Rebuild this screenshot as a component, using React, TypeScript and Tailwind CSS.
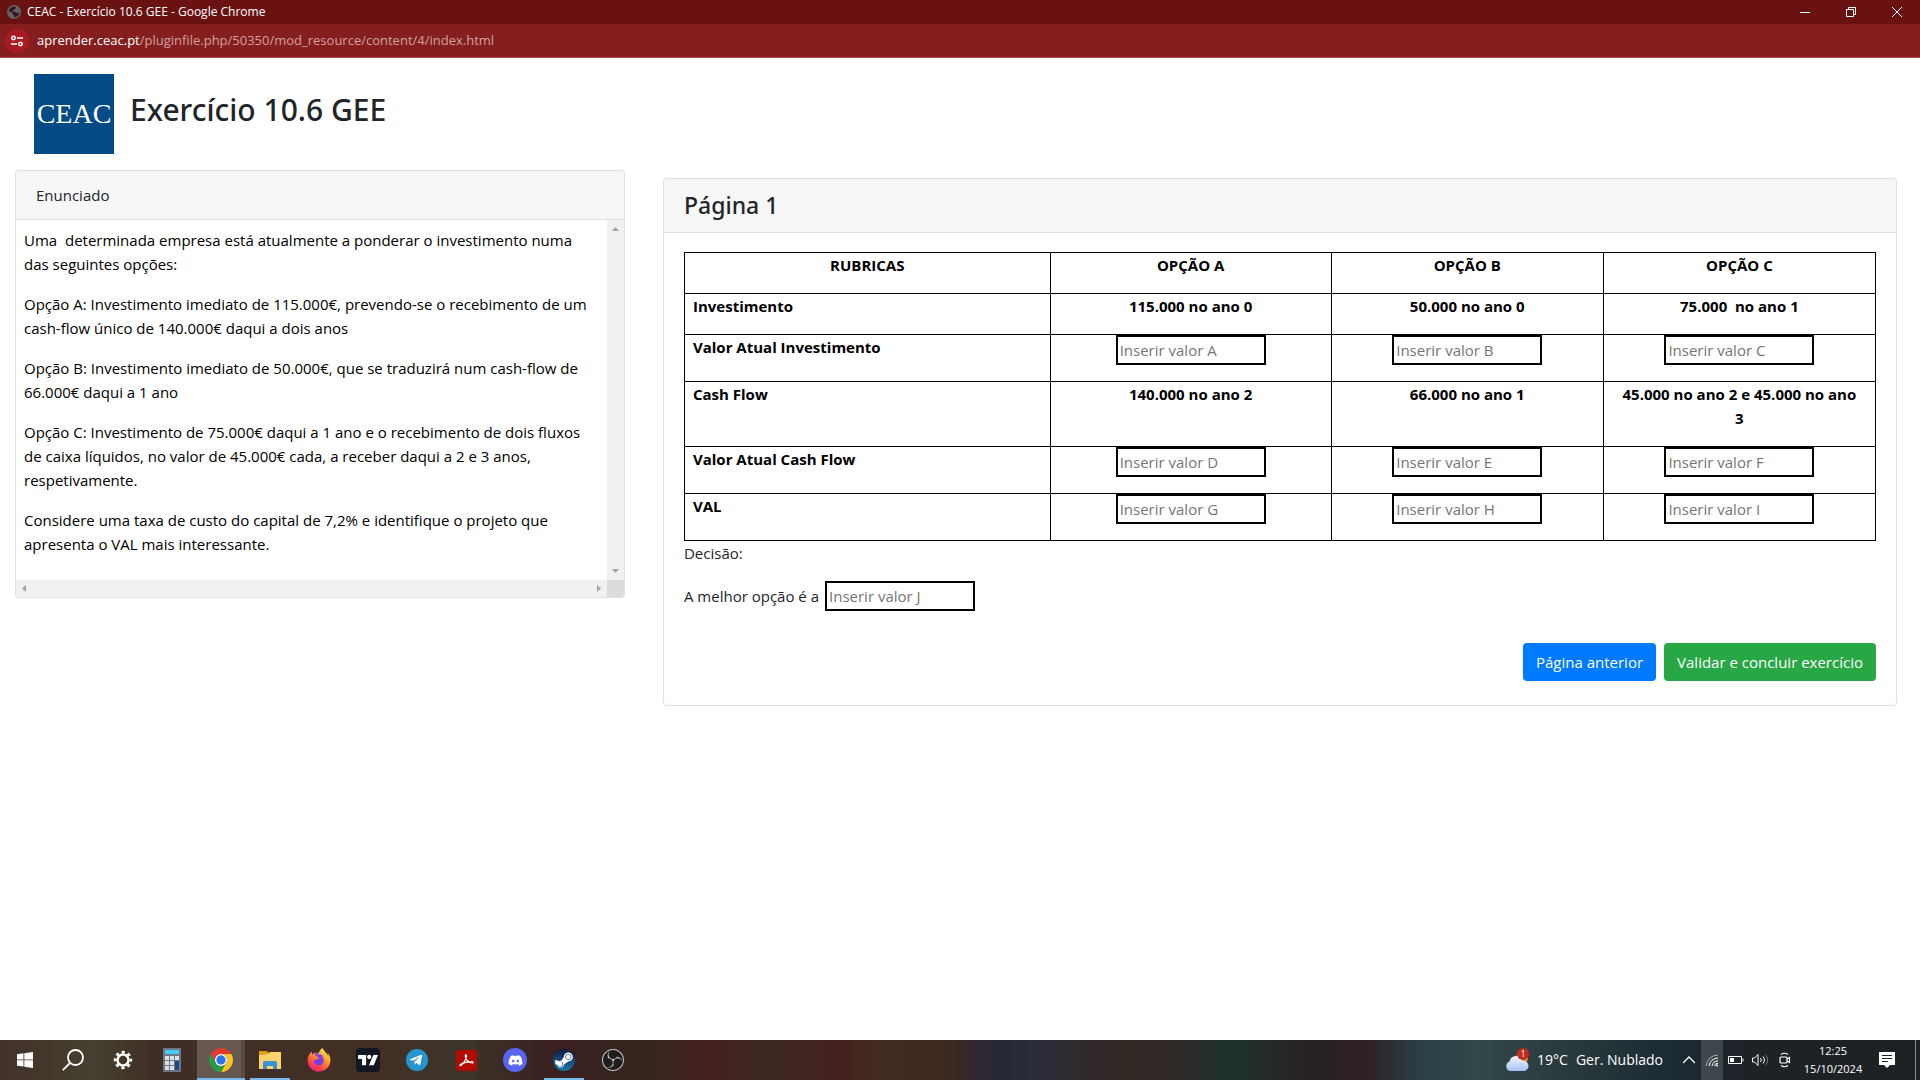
import type { ReactNode } from 'react'
import { FaDiscord, FaFirefoxBrowser, FaSteamSymbol, FaTelegramPlane } from 'react-icons/fa'
import { SiObsstudio, SiTradingview } from 'react-icons/si'

const statement = [
  'Uma\u00a0 determinada empresa está atualmente a ponderar o investimento numa das seguintes opções:',
  'Opção A: Investimento imediato de 115.000€, prevendo-se o recebimento de um cash-flow único de 140.000€ daqui a dois anos',
  'Opção B: Investimento imediato de 50.000€, que se traduzirá num cash-flow de 66.000€ daqui a 1 ano',
  'Opção C: Investimento de 75.000€ daqui a 1 ano e o recebimento de dois fluxos de caixa líquidos, no valor de 45.000€ cada, a receber daqui a 2 e 3 anos, respetivamente.',
  'Considere uma taxa de custo do capital de 7,2% e identifique o projeto que apresenta o VAL mais interessante.',
]

type Row = { label: string; values?: string[]; inputs?: string[] }

const rows: Row[] = [
  { label: 'Investimento', values: ['115.000 no ano 0', '50.000 no ano 0', '75.000\u00a0 no ano 1'] },
  { label: 'Valor Atual Investimento', inputs: ['A', 'B', 'C'] },
  { label: 'Cash Flow', values: ['140.000 no ano 2', '66.000 no ano 1', '45.000 no ano 2 e 45.000 no ano 3'] },
  { label: 'Valor Atual Cash Flow', inputs: ['D', 'E', 'F'] },
  { label: 'VAL', inputs: ['G', 'H', 'I'] },
]

const ValueInput = ({ id }: { id: string }) => (
  <input
    id={`valor-${id}`}
    type="text"
    aria-label={`Valor ${id}`}
    placeholder={`Inserir valor ${id}`}
    className="block h-[30px] w-[150px] border-2 border-black bg-white px-0.5 text-[15px] text-black placeholder:text-[#757575]"
  />
)

const WindowBar = () => (
  <header>
    <div className="flex h-6 items-center justify-between bg-[#6a1212] text-white">
      <div className="flex items-center gap-[6px] pl-[7px]">
        <svg viewBox="0 0 14 14" className="size-[14px]">
          <circle cx="7" cy="7" r="7" fill="#5f6368" />
          <path d="M6.5 1.5C4 2 2 4 1.6 6.600l2.600.2 1.600 1.400v1.300l1.400.4.2 2.500c2.500-.2 4.600-2 5-4.700L9.600 8 8 6.800H5.600V5.200h1.600V3.800h1.600V2z" fill="#3b1213" />
        </svg>
        <span className="text-xs">CEAC - Exercício 10.6 GEE - Google Chrome</span>
      </div>
      <div className="flex h-full">
        <button aria-label="Minimizar" className="flex w-[46px] items-center justify-center">
          <svg viewBox="0 0 10 10" className="size-[10px]"><path d="M0 5.500h10" stroke="#fff" /></svg>
        </button>
        <button aria-label="Restaurar" className="flex w-[46px] items-center justify-center">
          <svg viewBox="0 0 10 10" className="size-[10px]" fill="none" stroke="#fff">
            <path d="M.5 2.500h7v7h-7zM2.500 2.500v-2h7v7h-2" />
          </svg>
        </button>
        <button aria-label="Fechar" className="flex w-[46px] items-center justify-center">
          <svg viewBox="0 0 10 10" className="size-[10px]"><path d="M0 0l10 10M10 0L0 10" stroke="#fff" /></svg>
        </button>
      </div>
    </div>
    <div className="flex h-[34px] items-center gap-2 border-b border-[#b04a4d] bg-[#841e1f] pl-[5px]">
      <button aria-label="Informações do site" className="flex size-6 items-center justify-center rounded-full bg-[#a91b1e]">
        <svg viewBox="0 0 12 12" className="size-3" fill="none" stroke="#fff" strokeWidth="1.500">
          <circle cx="2.500" cy="3" r="1.700" />
          <circle cx="9.500" cy="9" r="1.700" />
          <path d="M6 3h6M0 9h6" />
        </svg>
      </button>
      <span className="pb-0.5 text-[13px] text-[#d3a09f]">
        <span className="text-white">aprender.ceac.pt</span>/pluginfile.php/50350/mod_resource/content/4/index.html
      </span>
    </div>
  </header>
)

const Arrow = ({ d }: { d: string }) => (
  <svg viewBox="0 0 17 17" className="size-[17px] shrink-0">
    <path d={d} fill="#a3a3a3" />
  </svg>
)

const StatementCard = () => (
  <section className="overflow-hidden rounded border border-[#dfdfdf] bg-white">
    <h2 className="border-b border-[#dfdfdf] bg-[#f7f7f7] px-5 py-3">Enunciado</h2>
    <div className="flex">
      <div className="grow px-2 py-2 text-black">
        {statement.map((text) => (
          <p key={text} className="mb-4">{text}</p>
        ))}
      </div>
      <div className="flex flex-col justify-between bg-[#f1f1f1]">
        <Arrow d="M5 11h7L8.500 7z" />
        <Arrow d="M5 6h7l-3.500 4z" />
      </div>
    </div>
    <div className="flex bg-[#f1f1f1]">
      <div className="flex grow justify-between">
        <Arrow d="M10 5v7L6 8.500z" />
        <Arrow d="M7 5v7l4-3.500z" />
      </div>
      <div className="size-[17px] bg-[#dcdcdc]" />
    </div>
  </section>
)

const ExerciseCard = () => (
  <section className="rounded border border-[#dfdfdf] bg-white">
    <h2 className="rounded-t border-b border-[#dfdfdf] bg-[#f7f7f7] px-5 py-3 font-['Noto_Sans',sans-serif] text-[23px] leading-[29px] font-medium">
      Página 1
    </h2>
    <div className="px-5 pt-[19px] pb-6">
      <table className="w-full table-fixed border-collapse text-black">
        <thead>
          <tr>
            <th className="w-[30.7%] border border-black px-2 pb-4">RUBRICAS</th>
            <th className="w-[23.6%] border border-black px-4 pb-4">OPÇÃO A</th>
            <th className="border border-black px-4 pb-4">OPÇÃO B</th>
            <th className="border border-black px-4 pb-4">OPÇÃO C</th>
          </tr>
        </thead>
        <tbody>
          {rows.map((row) => (
            <tr key={row.label}>
              <th scope="row" className="border border-black px-2 pb-4 text-left align-top">{row.label}</th>
              {row.values?.map((value) => (
                <td key={value} className="border border-black px-4 pb-4 text-center align-top font-bold">{value}</td>
              ))}
              {row.inputs?.map((id) => (
                <td key={id} className="border border-black px-4 pb-4 align-top">
                  <div className="flex justify-center"><ValueInput id={id} /></div>
                </td>
              ))}
            </tr>
          ))}
        </tbody>
      </table>
      <p className="mb-4">Decisão:</p>
      <div className="mb-8 flex items-center gap-1.5">
        <label htmlFor="valor-J">A melhor opção é a</label>
        <ValueInput id="J" />
      </div>
      <div className="flex justify-end gap-2 text-white">
        <button className="rounded bg-[#007bff] px-[13px] py-[7px]">Página anterior</button>
        <button className="rounded bg-[#28a745] px-[13px] py-[7px]">Validar e concluir exercício</button>
      </div>
    </div>
  </section>
)

const ChromeIcon = () => (
  <svg viewBox="0 0 24 24" className="size-6">
    <path d="M12 6h10.390A12 12 0 0 0 1.610 6L6.800 15A6 6 0 0 1 12 6z" fill="#e33b2e" />
    <path d="M17.200 15L12 24A12 12 0 0 0 22.390 6H12a6 6 0 0 1 5.200 9z" fill="#fcc31e" />
    <path d="M6.800 15L1.610 6A12 12 0 0 0 12 24l5.200-9a6 6 0 0 1-10.400 0z" fill="#2a9a48" />
    <circle cx="12" cy="12" r="6" fill="#fff" />
    <circle cx="12" cy="12" r="4.700" fill="#2a76e8" />
  </svg>
)

const CalculatorIcon = () => (
  <svg viewBox="0 0 18 24" className="h-6 w-[18px]">
    <rect width="18" height="24" rx="1" fill="#6d7883" />
    <rect x="2" y="2" width="14" height="4" fill="#45cdf5" />
    <path d="M2 8h4v4H2zM7 8h4v4H7zM12 8h4v4h-4zM2 13h4v4H2zM7 13h4v4H7zM2 18h4v4H2zM7 18h4v4H7z" fill="#dde1e4" />
    <path d="M12 13h4v9h-4z" fill="#164a8c" />
  </svg>
)

const FolderIcon = () => (
  <svg viewBox="0 0 22 18" className="h-[18px] w-[22px]">
    <path d="M0 0h8l2 2v3H0z" fill="#d89b15" />
    <path d="M0 4l9-1 2-2h11v17H0z" fill="#fcd36b" />
    <path d="M4 18v-6q0-2 2-2h10q2 0 2 2v6h-4v-3H8v3z" fill="#3b8fd3" />
  </svg>
)

const FirefoxIcon = () => (
  <svg viewBox="0 0 24 24" className="size-6">
    <defs>
      <linearGradient id="flame" x1="0.800" y1="0" x2="0.200" y2="1">
        <stop offset="0" stopColor="#fff04a" />
        <stop offset="0.400" stopColor="#ff9a28" />
        <stop offset="0.750" stopColor="#ff4050" />
        <stop offset="1" stopColor="#e81f80" />
      </linearGradient>
    </defs>
    <circle cx="12" cy="12" r="8" fill="#7a3fe0" />
    <FaFirefoxBrowser size={24} fill="url(#flame)" />
  </svg>
)

const AcrobatIcon = () => (
  <svg viewBox="0 0 21 21" className="size-[21px]">
    <rect width="21" height="21" rx="3" fill="#b30b00" />
    <path
      d="M4.500 15.500c2-1 5.500-5 6-9.500.1-1.700-1.400-1.700-1.300 0 .3 3.500 3.500 6.800 7 7 1.600-.2 1-1.400-.7-1.300-3.500 0-8 1-10.600 2.600-1.200.9-1.400 1.700-.4 1.200z"
      fill="none"
      stroke="#fff"
      strokeWidth="1.200"
    />
  </svg>
)

const apps: { name: string; icon: ReactNode; active?: boolean; open?: boolean }[] = [
  {
    name: 'Iniciar',
    icon: (
      <svg viewBox="0 0 16 16" className="size-4" fill="#fff">
        <path d="M0 2.200L6.500 1.300v6.200H0zM7.300 1.200L16 0v7.500H7.300zM0 8.300h6.500v6.300L0 13.700zM7.300 8.300H16V16l-8.700-1.200z" />
      </svg>
    ),
  },
  {
    name: 'Procurar',
    icon: (
      <svg viewBox="0 0 24 22" className="h-[22px] w-6" fill="none" stroke="#fff" strokeWidth="1.800">
        <circle cx="13.500" cy="8.500" r="7.500" />
        <path d="M8 14L.8 21.200" />
      </svg>
    ),
  },
  {
    name: 'Definições',
    icon: (
      <svg viewBox="0 0 20 20" className="size-5" fill="none" stroke="#fff">
        <circle cx="10" cy="10" r="5.500" strokeWidth="2.500" />
        <circle cx="10" cy="10" r="7.800" strokeWidth="2.800" strokeDasharray="3.060 3.060" strokeDashoffset="1.530" />
      </svg>
    ),
  },
  { name: 'Calculadora', icon: <CalculatorIcon /> },
  { name: 'Google Chrome', icon: <ChromeIcon />, active: true },
  { name: 'Explorador de Ficheiros', icon: <FolderIcon />, open: true },
  { name: 'Firefox', icon: <FirefoxIcon /> },
  {
    name: 'TradingView',
    icon: <span className="flex size-6 items-center justify-center rounded bg-[#131722]"><SiTradingview size={20} /></span>,
  },
  {
    name: 'Telegram',
    icon: (
      <span className="flex size-[22px] items-center justify-center rounded-full bg-[#2497d3] pr-0.5">
        <FaTelegramPlane size={14} />
      </span>
    ),
  },
  { name: 'Adobe Acrobat', icon: <AcrobatIcon /> },
  {
    name: 'Discord',
    icon: <span className="flex size-6 items-center justify-center rounded-full bg-[#5865f2]"><FaDiscord size={15} /></span>,
  },
  {
    name: 'Steam',
    icon: (
      <span className="flex size-[22px] items-center justify-center rounded-full bg-linear-to-b from-[#101c40] to-[#1579ae]">
        <FaSteamSymbol size={20} />
      </span>
    ),
    open: true,
  },
  {
    name: 'OBS Studio',
    icon: <span className="flex size-[22px] items-center justify-center rounded-full bg-[#1f1d1e] text-[#cfcaca]"><SiObsstudio size={22} /></span>,
  },
]

const Taskbar = () => (
  <footer className="flex h-10 justify-between bg-[linear-gradient(90deg,#42312a_0%,#45402f_5%,#3f2e26_8%,#432f26_20%,#3c352b_24%,#3a1f1f_29%,#35251f_33%,#45211f_37%,#3d2922_40%,#45211f_44%,#432d23_46%,#40291f_49%,#262837_52%,#2b2d3b_54%,#332824_58%,#2f2927_61%,#1f322f_64%,#262222_68%,#2e1f25_71%,#2b4045_74%,#32484a_77%,#28383b_82%,#1c2b33_87%,#1d2226_91%,#1c2224_100%)] text-white">
    <nav className="flex gap-px pl-px">
      {apps.map((app) => (
        <button
          key={app.name}
          aria-label={app.name}
          className={`flex w-12 flex-col items-center ${app.active ? 'bg-white/20 shadow-[inset_-4px_0_0_rgba(0,0,0,0.15)]' : ''}`}
        >
          <span className="flex grow items-center pt-0.5">{app.icon}</span>
          <span className={`h-0.5 ${app.active ? 'w-full bg-[#76b9ed]' : app.open ? 'w-10 bg-[#76b9ed]' : 'w-10'}`} />
        </button>
      ))}
    </nav>
    <div className="flex">
      <div className="flex items-center gap-2 pr-5">
        <svg viewBox="0 0 24 24" className="size-6">
          <defs>
            <linearGradient id="cloud" x1="0" y1="0" x2="0" y2="1">
              <stop offset="0" stopColor="#f2f6ff" />
              <stop offset="1" stopColor="#a4c1f5" />
            </linearGradient>
          </defs>
          <circle cx="17" cy="10" r="6" fill="#f0952a" />
          <path d="M5 23a5 5 0 0 1-.5-9.500A7 7 0 0 1 18 13a5 5 0 0 1 1 10z" fill="url(#cloud)" />
          <circle cx="18" cy="6" r="6" fill="#c42b1c" />
          <text x="18" y="9" textAnchor="middle" fontSize="9" fill="#fff">1</text>
        </svg>
        <span className="text-sm">19°C</span>
        <span className="text-sm">Ger. Nublado</span>
      </div>
      <button aria-label="Mostrar ícones ocultos" className="flex w-[18px] items-center">
        <svg viewBox="0 0 12 12" className="size-3" fill="none" stroke="#fff" strokeWidth="1.300"><path d="M0 9l6-6 6 6" /></svg>
      </button>
      <button aria-label="Rede" className="flex w-[22px] items-center justify-center bg-white/15">
        <svg viewBox="0 0 14 14" className="size-[14px]" fill="none" stroke="#fff">
          <path d="M1 13A12 12 0 0 1 13 2" stroke="#aaa" />
          <path d="M4 13a9 9 0 0 1 9-8M7 13a6 6 0 0 1 6-5M9.500 13a3 3 0 0 1 3.500-2.500" />
          <circle cx="12" cy="12.500" r="1" fill="#fff" stroke="none" />
        </svg>
      </button>
      <button aria-label="Bateria" className="flex w-[26px] items-center justify-center">
        <svg viewBox="0 0 16 10" className="h-[10px] w-4" fill="none" stroke="#fff">
          <path d="M.5 1.500h13v7H.5zM15 3.500v3" />
          <path d="M2 3h4v4H2z" fill="#fff" stroke="none" />
        </svg>
      </button>
      <button aria-label="Volume" className="flex w-6 items-center justify-center">
        <svg viewBox="0 0 18 14" className="h-[14px] w-[18px]" fill="none" stroke="#fff">
          <path d="M.5 5h2L6 1.500v11L2.500 9h-2zM8.500 5a3 3 0 0 1 0 4M11 3.500a5 5 0 0 1 0 7" />
          <path d="M13.500 2a7 7 0 0 1 0 10" stroke="#777" />
        </svg>
      </button>
      <button aria-label="Reunir agora" className="flex w-6 items-center justify-center">
        <svg viewBox="0 0 12 16" className="h-4 w-3" fill="none" stroke="#fff" strokeWidth="1.200">
          <path d="M2 2.500Q5.500 0 9 2.500M2 13.500q3.500 2.500 7 0" />
          <rect x="1" y="5" width="7" height="6" rx="1" />
          <path d="M8 7l2.500-1.500v5L8 9" />
        </svg>
      </button>
      <div className="flex w-[72px] flex-col items-center justify-center text-[11px] leading-[18px]">
        <span>12:25</span>
        <span>15/10/2024</span>
      </div>
      <button aria-label="Notificações" className="mr-[10px] flex w-9 items-center justify-center">
        <svg viewBox="0 0 16 16" className="size-4">
          <path d="M0 0h16v13h-5l-3 3-3-3H0z" fill="#fff" />
          <path d="M3 3.500h10M3 6.500h10M3 9.500h6" stroke="#1d2226" />
        </svg>
      </button>
      <div className="w-[5px] border-l border-[#8a8d8f]" />
    </div>
  </footer>
)

export default function App() {
  return (
    <div className="flex min-h-screen flex-col bg-white font-['Open_Sans','Noto_Sans',sans-serif] text-[15px] leading-6 text-[#212529]">
      <WindowBar />
      <div className="flex items-center gap-4 px-[34px] py-4">
        <div className="flex size-20 items-center justify-center bg-[#024b85] font-['Liberation_Serif',serif] text-[28px] text-white">
          CEAC
        </div>
        <h1 className="pb-2 font-['Noto_Sans',sans-serif] text-[30px] leading-10 font-medium">Exercício 10.6 GEE</h1>
      </div>
      <main className="flex grow items-start">
        <div className="w-1/3 px-[15px]">
          <StatementCard />
        </div>
        <div className="w-2/3 px-[23px] pt-2">
          <ExerciseCard />
        </div>
      </main>
      <Taskbar />
    </div>
  )
}
